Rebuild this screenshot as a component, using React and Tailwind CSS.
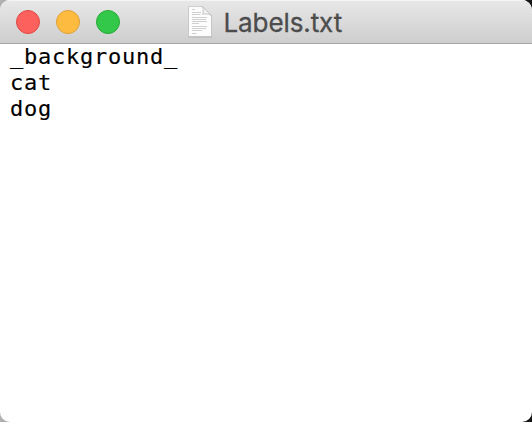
const controls = [
  { name: 'Close', color: 'bg-[#fc615d] border-[#df4945]' },
  { name: 'Minimize', color: 'bg-[#fdbc40] border-[#de9f35]' },
  { name: 'Zoom', color: 'bg-[#34c84a] border-[#27aa35]' },
];

const labels = ['_background_', 'cat', 'dog'];

function DocumentIcon() {
  return (
    <svg width="26" height="32" viewBox="0 0 26 32" aria-hidden="true">
      <path d="M1.5 1.5H15.5L25 10V31.5H1.5Z" fill="#8b8b8b" opacity=".45" />
      <path d="M1.5 .5H15.5L24.5 9.5V30.5H1.5Z" fill="#fcfcfc" stroke="#b8b8b8" strokeWidth=".6" />
      <path d="M15.5 .5C16.5 3 16.3 6 15.7 8.2C18.5 7.6 22 8 24.5 9.5Z" fill="#f0f0f0" stroke="#b5b5b5" strokeWidth=".7" />
      <path d="M5 3.5H8M5 6.5H14M5 8.5H13.5M5 11.5H20M5 13.5H19M5 15.5H20M5 17.5H12M5 20.5H20M5 22.5H19M5 24.5H15M5 27.5H9.5" stroke="#d0d0d0" strokeWidth="1" />
    </svg>
  );
}

export default function App() {
  return (
    <div className="h-[422px] w-[532px] overflow-hidden bg-[linear-gradient(90deg,#b0b0b0_50%,#151515_50%)]">
      <main className="flex h-full flex-col overflow-hidden rounded-[10px] bg-white">
        <header className="flex h-11 shrink-0 items-center border-b border-[#a6a6a6] bg-linear-to-b from-[#e8e8e8] to-[#cecece] shadow-[inset_0_1px_0_#f4f4f4]">
          <div className="flex w-[187px] gap-4 pl-4">
            {controls.map(({ name, color }) => (
              <button key={name} aria-label={name} className={`size-6 rounded-full border ${color}`} />
            ))}
          </div>
          <DocumentIcon />
          <h1 className="ml-[10.5px] mt-[3px] whitespace-nowrap font-['Inter',sans-serif] text-[26px] leading-[30px] tracking-[-0.1px] text-[#4c4c4c] [-webkit-text-stroke:0.3px_#4c4c4c]">Labels.txt</h1>
        </header>
        <pre className="pl-[10px] font-['DejaVu_Sans_Mono',monospace] text-[22px] leading-[26px] tracking-[0.755px] text-black [-webkit-text-stroke:0.15px_black]">{labels.join('\n')}</pre>
      </main>
    </div>
  );
}
